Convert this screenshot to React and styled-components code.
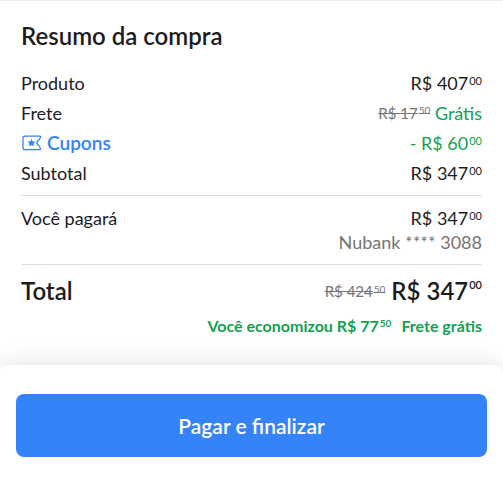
import React from 'react';
import styled, { createGlobalStyle } from 'styled-components';

const colors = {
  text: '#1c1c1e',
  gray: '#757575',
  line: '#dedede',
  green: '#12a150',
  blue: '#3483fa',
};

const GlobalStyle = createGlobalStyle`
  * {
    box-sizing: border-box;
  }

  body {
    margin: 0;
    background: white;
    color: ${colors.text};
    font-family: Lato, "Noto Sans", sans-serif;
  }
`;

const Page = styled.div`
  min-height: 100vh;
  display: flex;
  flex-direction: column;
  border-top: 1px solid #eeeeee;
`;

const Summary = styled.main`
  flex: 1;
  padding: 21px 21px 29px;
`;

const Title = styled.h1`
  margin: 0 0 21px;
  font-size: 24px;
  line-height: 28px;
  font-weight: 600;
`;

const Section = styled.dl`
  margin: 0;
  padding: ${(props) => (props.$first ? '0 0 10px' : '10px 0')};
  display: flex;
  flex-direction: column;
  gap: 6px;
  border-bottom: 1px solid ${colors.line};
`;

const Row = styled.div`
  display: flex;
  justify-content: space-between;
  font-size: 18px;
  line-height: 24px;
`;

const Label = styled.dt`
  margin: 0;
`;

const Value = styled.dd`
  margin: 0;
  text-align: right;
  color: ${(props) => (props.$green ? colors.green : 'inherit')};
`;

const CouponLink = styled.a`
  display: flex;
  align-items: center;
  gap: 5px;
  color: ${colors.blue};
  font-size: 19px;
  font-weight: 600;
  text-decoration: none;
`;

const Cents = styled.sup`
  padding-left: 1px;
  font-size: ${(props) => (props.$small ? '10px' : '11px')};
  line-height: 0;
  vertical-align: 5px;
`;

const OldPrice = styled.s`
  color: ${colors.gray};
  font-size: 15px;
  line-height: 0;
  font-weight: normal;
  vertical-align: 1px;
`;

const Card = styled.div`
  color: ${colors.gray};
`;

const TotalRow = styled.div`
  margin-top: 10px;
  display: flex;
  justify-content: space-between;
  font-size: 24px;
  line-height: 32px;
  font-weight: 600;

  ${OldPrice} {
    vertical-align: 3px;
  }

  ${Cents} {
    vertical-align: 11px;
  }

  ${OldPrice} ${Cents} {
    vertical-align: 4px;
  }
`;

const Savings = styled.p`
  margin: 9px 0 0;
  display: flex;
  justify-content: flex-end;
  gap: 10px;
  color: ${colors.green};
  font-size: 16px;
  line-height: 20px;
  font-weight: bold;
`;

const Footer = styled.footer`
  padding: 29px 16px 43px;
  border-radius: 8px 8px 0 0;
  background: white;
  box-shadow: 0 0 24px rgba(0, 0, 0, 0.13);
`;

const PayButton = styled.button`
  width: 100%;
  height: 63px;
  padding: 0;
  border: 0;
  border-radius: 8px;
  background: ${colors.blue};
  color: white;
  font-family: inherit;
  font-size: 21px;
  font-weight: 600;
  cursor: pointer;
`;

const Price = ({ value, cents, small }) => (
  <>
    R$ {value}
    <Cents $small={small}>{cents}</Cents>
  </>
);

const CouponIcon = () => (
  <svg width="21" height="16" viewBox="0 0 21 16" fill="none" aria-hidden="true">
    <path
      d="M4 1.2H18.7C19.6 1.2 20 1.8 19.5 2.5L19 3.2C18.7 3.8 18.6 4.3 18 4.8L16.8 6C15.8 7 15.8 8.7 16.8 9.7L18 10.9C18.6 11.5 18.7 12 19 12.7L19.4 13.4C19.8 14.1 19.5 14.7 18.7 14.7H4C2.7 14.7 2 14 2 12.7V3.2C2 1.9 2.7 1.2 4 1.2Z"
      stroke="currentColor"
      strokeWidth="1.3"
    />
    <path
      d="M10.5 3.7L11.7 6.4L14.6 6.7L12.4 8.7L13.1 11.6L10.5 10.1L7.9 11.6L8.6 8.7L6.4 6.7L9.3 6.4Z"
      fill="currentColor"
    />
  </svg>
);

const App = () => {
  return (
    <>
      <GlobalStyle />
      <Page>
        <Summary>
          <Title>Resumo da compra</Title>
          <Section $first>
            <Row>
              <Label>Produto</Label>
              <Value><Price value="407" cents="00" /></Value>
            </Row>
            <Row>
              <Label>Frete</Label>
              <Value $green>
                <OldPrice><Price value="17" cents="50" small /></OldPrice>
                {' '}Grátis
              </Value>
            </Row>
            <Row>
              <Label>
                <CouponLink href="#cupons">
                  <CouponIcon />
                  Cupons
                </CouponLink>
              </Label>
              <Value $green>- <Price value="60" cents="00" /></Value>
            </Row>
            <Row>
              <Label>Subtotal</Label>
              <Value><Price value="347" cents="00" /></Value>
            </Row>
          </Section>
          <Section>
            <Row>
              <Label>Você pagará</Label>
              <Value>
                <Price value="347" cents="00" />
                <Card>Nubank **** 3088</Card>
              </Value>
            </Row>
          </Section>
          <TotalRow>
            <span>Total</span>
            <span>
              <OldPrice><Price value="424" cents="50" small /></OldPrice>
              {' '}<Price value="347" cents="00" />
            </span>
          </TotalRow>
          <Savings>
            <span>Você economizou <Price value="77" cents="50" small /></span>
            <span>Frete grátis</span>
          </Savings>
        </Summary>
        <Footer>
          <PayButton type="button">Pagar e finalizar</PayButton>
        </Footer>
      </Page>
    </>
  );
};

export default App;
